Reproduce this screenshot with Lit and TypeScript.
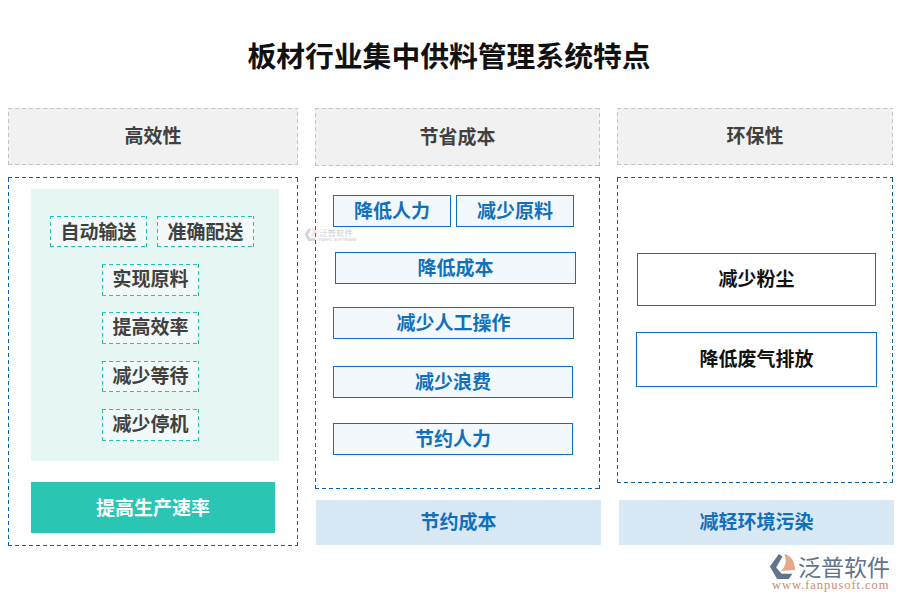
import { LitElement, html, css } from "lit";
import { customElement } from "lit/decorators.js";

const logoMark = html`<svg class="mark" viewBox="0 0 30 30" aria-hidden="true">
  <path d="M11 1 L1 15 L9 29 L22 29 L26 23 L14 23 L8 16 L15 4 Z" fill="#62748c"/>
  <path d="M17 1 C24 2 29 9 29 19 L13 20 C19 15 20 8 17 1 Z" fill="#e5a88a"/>
</svg>`;

@customElement("app-root")
export class AppRoot extends LitElement {
  static styles = css`
    :host { display: block; width: 900px; height: 600px; background: #fff; position: relative; overflow: hidden;
      font-family: "Noto Sans CJK SC", "Liberation Sans", sans-serif; font-weight: 700; font-size: 19px; color: #404040; }
    .title { margin: 0; padding-top: 34px; height: 108px; box-sizing: border-box; line-height: 42px; text-align: center; font-size: 28.8px; font-weight: 700; color: #111; width: 898px; }
    .cols { display: grid; grid-template-columns: 290px 285px 277px; column-gap: 17px; padding-left: 8px; align-items: start; }
    .col { display: flex; flex-direction: column; }
    .dash { border: 1px solid transparent; background-origin: border-box; background-repeat: no-repeat;
      background-image:
        repeating-linear-gradient(90deg, var(--d) 0 4px, transparent 4px 7px),
        repeating-linear-gradient(90deg, var(--d) 0 4px, transparent 4px 7px),
        repeating-linear-gradient(0deg, var(--d) 0 4px, transparent 4px 7px),
        repeating-linear-gradient(0deg, var(--d) 0 4px, transparent 4px 7px);
      background-size: 100% 1px, 100% 1px, 1px 100%, 1px 100%;
      background-position: 0 0, 0 100%, 0 0, 100% 0; }
    .head { --d: #c4c4c4; box-sizing: border-box; height: 57px; padding-bottom: 4px; background-color: #f1f1f1; display: flex; align-items: center; justify-content: center; }
    .c2 .head { width: 285px; height: 58px; }
    .c3 .head { width: 276px; height: 57px; }
    .panel { --d: #0d62a8; box-sizing: border-box; margin-top: 12px; }
    .c2 .head + .panel { margin-top: 11px; }
    .c1 .panel { height: 369px; padding: 11px 0 0 22px; }
    .c2 .panel { height: 312px; width: 285px; padding-top: 17px; }
    .c3 .panel { height: 306px; width: 276px; padding-top: 75px; }
    .green { width: 248px; height: 272px; background: #e6f6f2; display: flex; flex-direction: column; align-items: center; padding-top: 27px; box-sizing: border-box; }
    .tagrow { display: flex; gap: 10px; margin-left: -6px; }
    .tag { --d: #1fc4ac; box-sizing: border-box; width: 97px; height: 31px; padding-bottom: 2px; background-color: #f2f9f9; display: flex; align-items: center; justify-content: center; }
    .green > .tag { height: 32px; padding-bottom: 5px; margin-top: 17px; margin-left: -9px; }
    .green > .tag.g16 { margin-top: 16px; }
    .green > .tag.h31 { height: 31px; padding-bottom: 4px; }
    .cta { margin-top: 21px; width: 244px; height: 51px; padding-bottom: 3px; box-sizing: border-box; background: #2bc5b4; color: #fff; display: flex; align-items: center; justify-content: center; }
    .blue { box-sizing: border-box; border: 1px solid #0b72bd; background: #f2f8fc; color: #1070bd; display: flex; align-items: center; justify-content: center; height: 32px; padding-bottom: 4px; }
    .pair { display: flex; gap: 5px; margin-left: 17px; }
    .pair .blue { width: 118px; }
    .wide { width: 240px; margin-left: 17px; }
    .w1 { margin-left: 19px; width: 241px; margin-top: 25px; }
    .w2 { margin-top: 23px; width: 241px; }
    .w3 { margin-top: 27px; }
    .w4 { margin-top: 25px; }
    .plain { box-sizing: border-box; border: 1px solid #0b72bd; background: #fff; color: #111; display: flex; align-items: center; justify-content: center; padding-bottom: 4px; }
    .p1 { width: 239px; height: 53px; margin-left: 19px; }
    .p2 { width: 241px; height: 55px; margin-left: 18px; margin-top: 26px; }
    .foot { box-sizing: border-box; height: 45px; padding-bottom: 4px; background: #d9e8f5; color: #1070bd; display: flex; align-items: center; justify-content: center; margin-top: 11px; }
    .c2 .foot { width: 285px; margin-left: 1px; }
    .c3 .foot { width: 275px; margin-left: 2px; margin-top: 17px; }
    .wm { position: absolute; left: 304px; top: 227px; display: flex; align-items: center; gap: 1px; opacity: .3; }
    .wm .mark { width: 14px; height: 15px; }
    .wm .t1 { font-size: 8.5px; line-height: 9px; font-weight: 500; color: #777; display: block; white-space: nowrap; }
    .wm .t2 { font-size: 4px; line-height: 5px; color: #777; display: block; white-space: nowrap; font-family: "Liberation Sans", sans-serif; }
    .logo { position: absolute; left: 769px; top: 553px; width: 126px; }
    .logo .top { display: flex; align-items: center; gap: 2px; height: 26px; }
    .logo .mark { width: 27px; height: 27px; flex: none; }
    .logo .cn { font-size: 23px; line-height: 26px; font-weight: 400; color: #62748c; white-space: nowrap; }
    .logo .url { margin: -1px 0 0 3px; font-family: "Liberation Serif", serif; font-size: 12.5px; line-height: 14px; font-weight: 400; letter-spacing: .95px; color: #d0896a; white-space: nowrap; }
  `;

  render() {
    return html`
      <h1 class="title">板材行业集中供料管理系统特点</h1>
      <div class="cols">
        <section class="col c1">
          <div class="head dash">高效性</div>
          <div class="panel dash">
            <div class="green">
              <div class="tagrow"><div class="tag dash">自动输送</div><div class="tag dash">准确配送</div></div>
              <div class="tag dash">实现原料</div>
              <div class="tag dash g16">提高效率</div>
              <div class="tag dash h31">减少等待</div>
              <div class="tag dash">减少停机</div>
            </div>
            <div class="cta">提高生产速率</div>
          </div>
        </section>
        <section class="col c2">
          <div class="head dash">节省成本</div>
          <div class="panel dash">
            <div class="pair"><div class="blue">降低人力</div><div class="blue">减少原料</div></div>
            <div class="blue w1">降低成本</div>
            <div class="blue wide w2">减少人工操作</div>
            <div class="blue wide w3">减少浪费</div>
            <div class="blue wide w4">节约人力</div>
          </div>
          <div class="foot">节约成本</div>
        </section>
        <section class="col c3">
          <div class="head dash">环保性</div>
          <div class="panel dash">
            <div class="plain p1">减少粉尘</div>
            <div class="plain p2">降低废气排放</div>
          </div>
          <div class="foot">减轻环境污染</div>
        </section>
      </div>
      <div class="wm">${logoMark}<div><span class="t1">泛普软件</span><span class="t2">FANPU SOFTWARE</span></div></div>
      <div class="logo">
        <div class="top">${logoMark}<span class="cn">泛普软件</span></div>
        <p class="url">www.fanpusoft.com</p>
      </div>
    `;
  }
}
